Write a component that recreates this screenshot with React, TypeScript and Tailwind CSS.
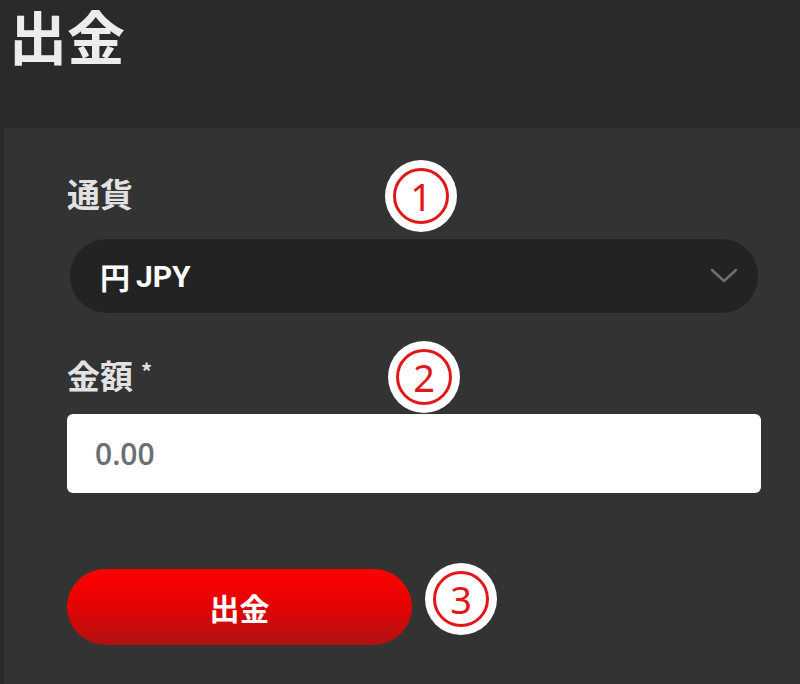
import React from "react";

const jp = { fontFamily: '"Noto Sans CJK JP", "Noto Sans", sans-serif' };

function Badge({ n, className }: { n: string; className: string }) {
  return (
    <div
      className={`absolute flex h-[72px] w-[72px] items-center justify-center rounded-full bg-white ${className}`}
    >
      <div className="flex h-[56px] w-[56px] items-center justify-center rounded-full border-[3px] border-[#e01818]">
        <span
          className="text-[38px] leading-none font-normal text-[#e01818]"
          style={{ fontFamily: '"Noto Sans", "Open Sans", sans-serif' }}
        >
          {n}
        </span>
      </div>
    </div>
  );
}

export default function App() {
  return (
    <div className="relative h-[684px] w-[800px] overflow-hidden bg-[#2a2a2a]" style={jp}>
      <div className="h-[128px] pl-[9px]">
        <h1 className="text-[58px] leading-[70px] font-bold text-[#ececec]">出金</h1>
      </div>
      <div className="ml-[4px] flex h-[556px] flex-col bg-[#333333] pl-[63px] pr-[39px] pt-[46px]">
        <div className="flex h-[40px] items-center text-[33px] font-bold text-[#e2e2e2]">通貨</div>
        <div className="mx-[3px] mt-[25px] flex h-[74px] items-center justify-between rounded-full bg-[#232323] pl-[30px] pr-[20px]">
          <span className="flex items-center gap-[6px] text-[30px] font-bold text-white">
            <span>円</span>
            <span style={{ fontFamily: 'Roboto, "Noto Sans", sans-serif' }}>JPY</span>
          </span>
          <svg width="28" height="18" viewBox="0 0 28 18" fill="none">
            <path d="M2 3 L14 14 L26 3" stroke="#6e6e6e" strokeWidth="2.5" strokeLinecap="round" strokeLinejoin="round" />
          </svg>
        </div>
        <div className="mt-[43px] flex h-[40px] items-center gap-[8px] text-[33px] font-bold text-[#e2e2e2]">
          <span>金額</span>
          <span className="text-[22px] -translate-y-[6px]">*</span>
        </div>
        <div className="mt-[18px] flex h-[79px] items-center rounded-[6px] bg-white pl-[28px]">
          <span
            className="text-[30px] font-semibold text-[#6b6e72]"
            style={{ fontFamily: '"Open Sans", "Noto Sans", sans-serif' }}
          >
            0.00
          </span>
        </div>
        <button className="mt-[76px] flex h-[76px] w-[345px] items-center justify-center rounded-full bg-[linear-gradient(to_bottom,#ff0000_0%,#e80202_45%,#b01212_100%)] text-[30px] font-bold text-white">
          出金
        </button>
      </div>
      <Badge n="1" className="left-[385px] top-[160px]" />
      <Badge n="2" className="left-[388px] top-[341px]" />
      <Badge n="3" className="left-[425px] top-[563px]" />
    </div>
  );
}
